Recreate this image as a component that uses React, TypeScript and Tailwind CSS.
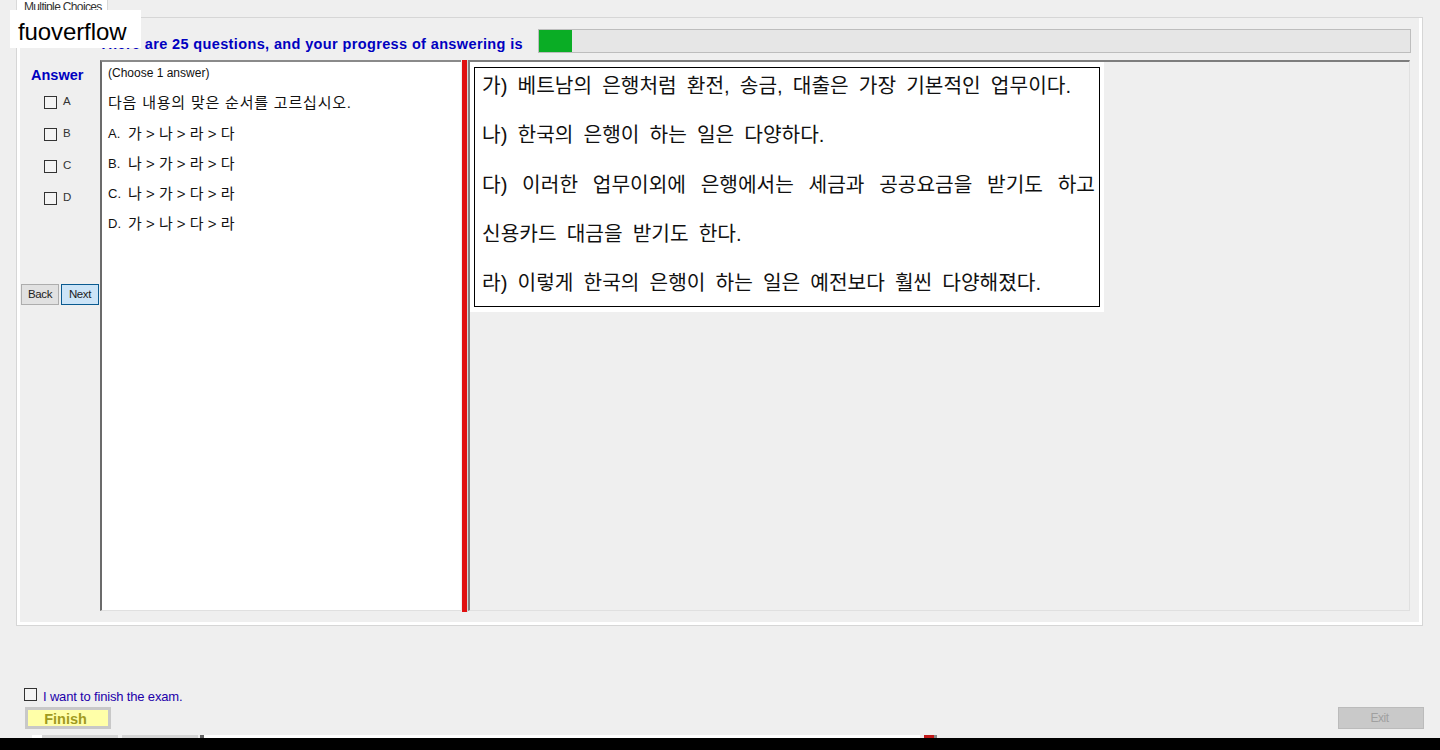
const answers = ['A', 'B', 'C', 'D']

const options = [
  ['A.', '가 > 나 > 라 > 다'],
  ['B.', '나 > 가 > 라 > 다'],
  ['C.', '나 > 가 > 다 > 라'],
  ['D.', '가 > 나 > 다 > 라'],
]

const Checkbox = ({ className = '' }: { className?: string }) => (
  <span className={`block h-[13px] w-[13px] border border-[#333] bg-[#f4f4f4] ${className}`} />
)

export default function App() {
  return (
    <div className="relative flex h-[750px] w-[1440px] flex-col overflow-hidden bg-[#efefef] font-['Liberation_Sans','Noto_Sans_CJK_KR',sans-serif]">
      {/* watermark */}
      <div className="absolute left-[10px] top-[10px] z-10 flex h-[38px] w-[131px] items-center bg-white pl-2 pt-[5px] text-2xl tracking-[-0.1px] text-black">
        fuoverflow
      </div>

      {/* tab */}
      <div className="ml-4 h-[17px] w-[92px] overflow-hidden border-x border-[#d9d9d9] bg-white pl-[7px] text-xs leading-[14px] tracking-[-0.65px] text-[#333]">
        Multiple Choices
      </div>

      {/* main panel */}
      <div className="ml-4 h-[609px] w-[1407px] border border-[#d6d6d6]">
        <div className="flex h-full flex-col border-x-[3px] border-b-[3px] border-white bg-[#efefef] pt-[11px]">
          <div className="flex h-[24px] items-center pl-[79px]">
            <span className="w-[439px] pt-[5px] text-[14.5px] font-bold leading-4 tracking-[0.37px] text-[#0000c0] whitespace-nowrap">
              There are 25 questions, and your progress of answering is
            </span>
            <div className="h-[24px] w-[873px] border border-[#bdbdbd] bg-[#e6e6e6]">
              <div className="h-full w-[33px] bg-[#0aad25]" />
            </div>
          </div>

          <div className="mt-[7px] flex h-[552px]">
            {/* answer column */}
            <div className="flex w-[80px] flex-col pl-px">
              <div className="pl-[10px] pt-[7px] text-[14.5px] font-bold leading-4 text-[#0000c0]">Answer</div>
              <div className="mt-[3px] flex flex-col">
                {answers.map(a => (
                  <label key={a} className="flex h-[32px] items-center pl-[23px] text-[11.5px] text-[#333]">
                    <Checkbox />
                    <span className="ml-[6px]">{a}</span>
                  </label>
                ))}
              </div>
              <div className="mt-[70px] flex gap-[2px]">
                <button className="h-[21px] w-[38px] border border-[#adadad] bg-[#e1e1e1] text-[11.5px] tracking-[-0.4px] text-[#222]">
                  Back
                </button>
                <button className="h-[21px] w-[38px] border border-[#0a5a90] bg-[#cce4f7] text-[11.5px] tracking-[-0.4px] text-[#222]">
                  Next
                </button>
              </div>
            </div>

            {/* question */}
            <div className="h-[551px] w-[361px] border-b border-l-2 border-t-2 border-b-[#e0e0e0] border-l-[#6b6b6b] border-t-[#8a8a8a] bg-white pl-[6px] pt-[4px] text-xs text-[#111]">
              <div className="h-[28px] leading-[14px]">(Choose 1 answer)</div>
              <div className="h-[31px] text-[15px] leading-[18px] tracking-[0.8px]">다음 내용의 맞은 순서를 고르십시오.</div>
              {options.map(([k, v]) => (
                <div key={k} className="flex h-[30px] text-[15px] leading-[18px]">
                  <span className="w-[20px] text-[13px]">{k}</span>
                  <span>{v}</span>
                </div>
              ))}
            </div>

            {/* splitter */}
            <div className="ml-px h-[552px] w-[6px] border-r border-[#d8d8d8] bg-[#e01010]" />

            {/* right pane */}
            <div className="h-[551px] w-[942px] border-b border-l-2 border-r border-t-2 border-b-[#e0e0e0] border-l-[#808080] border-r-[#e0e0e0] border-t-[#7d7d7d] bg-[#efefef]">
              <div className="h-[250px] w-[634px] bg-white pl-1 pt-[5px]">
                <div className="h-[240px] w-[626px] overflow-hidden border border-black px-[7px] text-[20.25px] leading-[49.25px] text-[#111]">
                  <div className="-mt-[6px] [word-spacing:4.5px]">가) 베트남의 은행처럼 환전, 송금, 대출은 가장 기본적인 업무이다.</div>
                  <div className="[word-spacing:4.5px]">나) 한국의 은행이 하는 일은 다양하다.</div>
                  <div className="w-[613px] text-justify [text-align-last:justify]">다) 이러한 업무이외에 은행에서는 세금과 공공요금을 받기도 하고</div>
                  <div className="[word-spacing:4.5px]">신용카드 대금을 받기도 한다.</div>
                  <div className="[word-spacing:4.5px]">라) 이렇게 한국의 은행이 하는 일은 예전보다 훨씬 다양해졌다.</div>
                </div>
              </div>
            </div>
          </div>
        </div>
      </div>

      {/* finish area */}
      <div className="ml-6 mt-[61px] flex h-[16px] items-start">
        <Checkbox className="mt-px" />
        <span className="ml-[6px] mt-[2px] text-[13px] leading-4 tracking-[-0.17px] text-[#2200aa]">I want to finish the exam.</span>
      </div>
      <div className="mt-[4px] flex h-[22px] justify-between pl-[25px] pr-4">
        <button className="h-[22px] w-[86px] border-[3px] border-[#c8c8c8] bg-[#ffffa8] pr-[5px] pt-px text-[14.5px] font-bold leading-4 text-[#a09a20]">
          Finish
        </button>
        <button className="h-[22px] w-[86px] border border-[#bbb] bg-[#c9c9c9] pr-[3px] text-xs tracking-[-0.5px] text-[#a0a0a0]">Exit</button>
      </div>

      {/* bottom strip */}
      <div className="mt-[6px] flex h-[3px] pl-[32px]">
        <div className="w-[10px] bg-white" />
        <div className="w-[76px] bg-[#d4d4d4]" />
        <div className="w-[4px]" />
        <div className="w-[76px] bg-[#d4d4d4]" />
        <div className="ml-[2px] w-[4px] bg-[#666]" />
        <div className="w-[716px] bg-white" />
        <div className="ml-[4px] w-[10px] bg-[#c01818]" />
        <div className="w-[3px] bg-[#888]" />
      </div>
      <div className="h-[12px] bg-black" />
    </div>
  )
}
